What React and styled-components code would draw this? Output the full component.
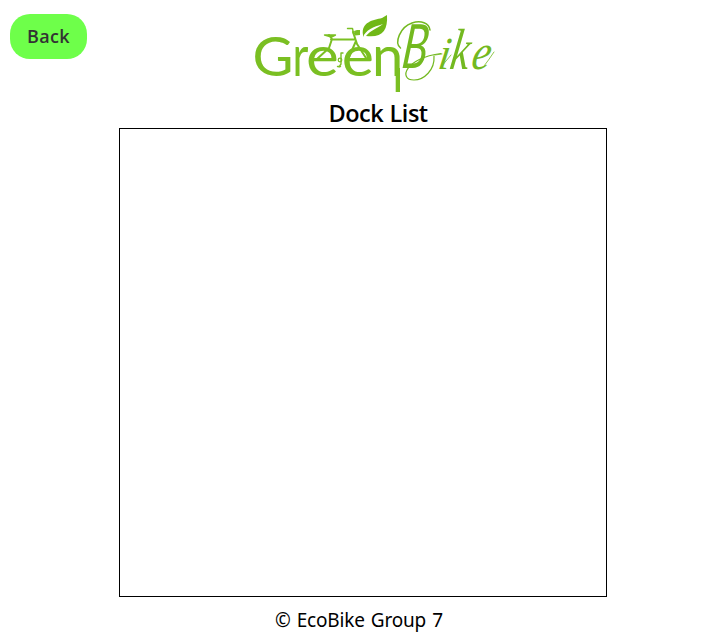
import React from "react";
import styled, { createGlobalStyle } from "styled-components";

const GlobalStyle = createGlobalStyle`
  *, *::before, *::after { box-sizing: border-box; }
  body { margin: 0; background: #fff; overflow: hidden; }
`;

const Page = styled.div`
  display: flex;
  flex-direction: column;
  width: 718px;
  height: 639px;
  color: #000;
  font-family: "Noto Sans", "Open Sans", sans-serif;
`;

const Header = styled.header`
  display: flex;
  align-items: flex-start;
  height: 99px;
  padding-left: 10px;
`;

const BackButton = styled.button`
  width: 77px;
  height: 45px;
  margin-top: 14px;
  padding: 0;
  border: 0;
  border-radius: 20px;
  background: #6eff4a;
  color: #333;
  font: 600 18px/45px "Open Sans", sans-serif;
  letter-spacing: 0.3px;
`;

const Logo = styled.svg`
  display: block;
  width: 250px;
  height: 90px;
  margin: 8px 0 0 163px;
  overflow: visible;
`;

const LogoSans = styled.text`
  font-family: Lato, sans-serif;
  font-size: ${({ $size }) => $size}px;
  fill: #7abf22;
`;

const LogoInitial = styled.text`
  font: italic 400 61px Lato, sans-serif;
  fill: #73b920;
`;

const LogoScript = styled.text`
  font-family: "Liberation Serif", serif;
  font-style: italic;
  font-size: ${({ $size }) => $size}px;
  fill: #73b920;
`;

const Title = styled.h1`
  height: 28px;
  margin: 0 0 1px 328.5px;
  font: 600 23.5px/28px "Open Sans", sans-serif;
  letter-spacing: -0.5px;
  word-spacing: 0.8px;
  white-space: nowrap;
`;

const DockList = styled.main`
  width: 488px;
  height: 469px;
  margin-left: 119px;
  border: 1px solid #000;
`;

const Footer = styled.footer`
  height: 42px;
  padding: 9px 0 0 275px;
  font-size: 19px;
  line-height: 28px;
  letter-spacing: -0.2px;
  word-spacing: 1.4px;
  white-space: nowrap;
`;

function GreenBikeLogo() {
  return (
    <Logo viewBox="250 8 250 90" role="img" aria-label="GreenBike">
      <LogoSans $size={54} transform="translate(252.5 75.5) scale(1.04 1)">G</LogoSans>
      <LogoSans $size={56} transform="translate(292.5 75.5) scale(.78 1)">r</LogoSans>
      <LogoSans $size={56} transform="translate(306 75.5) scale(1.11 1)">e</LogoSans>
      <LogoSans $size={56} transform="translate(341.8 75.5) scale(1.09 1)">e</LogoSans>
      <LogoSans $size={56} transform="translate(372 75.5) scale(1 1)">n</LogoSans>
      <path d="M395.7 68h4.3v24h-4.3z" fill="#7abf22" />
      <g fill="none" stroke="#7abf22" strokeLinecap="round" strokeLinejoin="round">
        <path d="M331 39.5h23M329 35l3 4-3 9-12 11M353 32l4 12 9 14M356 41l-7 16" strokeWidth="2" />
        <path d="M324.5 35h11l-4 2z" fill="#7abf22" strokeWidth="1.4" />
        <path d="M347.5 28.5h5l1 5 4-1M341 53v11l-2 3M337.5 66.5h3M341 53h2" strokeWidth="1.4" />
        <circle cx="340" cy="60" r="1.8" strokeWidth="1.2" />
      </g>
      <path d="M354 31l3-1h3v5l-5 .5z" fill="#7abf22" />
      <path d="M363 35C361 22 373 20 382 18L387 15C388 31 382 38 366 36C371 30 376 29 383 24C373 27 366 30 363 37Z" fill="#70b817" />
      <LogoInitial transform="translate(400.5 68) skewX(-7) scale(.7 1)">B</LogoInitial>
      <LogoScript $size={46} transform="translate(437 69) skewX(-9) scale(.9 1)">i</LogoScript>
      <LogoScript $size={58} transform="translate(448.5 69) skewX(-9) scale(.74 1)">k</LogoScript>
      <LogoScript $size={50} transform="translate(470 69) skewX(-11) scale(.83 1)">e</LogoScript>
      <g fill="none" stroke="#73b920" strokeLinecap="round">
        <path d="M400.5 48C394 43 400 27 412 23C421 20 429 23 430 30" strokeWidth="1.5" />
        <path d="M434 56C435 70 424 80 414 80C398 80 405 58 441 53.5" strokeWidth="1.2" />
        <path d="M435 55l7-1M441 67l10-12M484 66q4-5 10-14" strokeWidth=".8" />
      </g>
    </Logo>
  );
}

export default function App() {
  return (
    <>
      <GlobalStyle />
      <Page>
        <Header>
          <BackButton type="button">Back</BackButton>
          <GreenBikeLogo />
        </Header>
        <Title>Dock List</Title>
        <DockList />
        <Footer>© EcoBike Group 7</Footer>
      </Page>
    </>
  );
}
